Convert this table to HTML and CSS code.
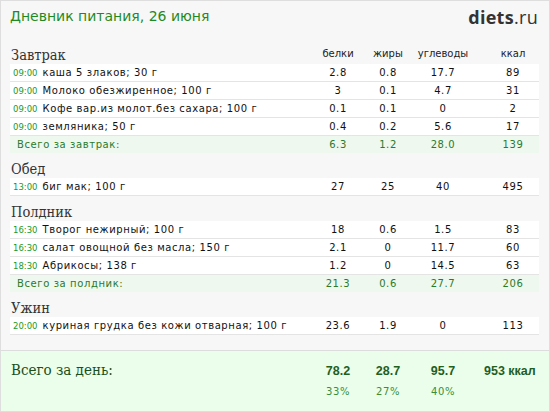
FILE: index.html
```html
<!DOCTYPE html>
<html lang="ru">
<head>
<meta charset="utf-8">
<title>Дневник питания</title>
<link rel="stylesheet" href="styles.css">
</head>
<body>
<div class="page">
  <header class="top">
    <h1 class="title">Дневник питания, 26 июня</h1>
    <div class="logo"><b>diets</b>.ru</div>
  </header>

  <main class="diary">
    <section class="meal">
      <div class="meal-head">
        <h2>Завтрак</h2>
        <span class="label">белки</span>
        <span class="label">жиры</span>
        <span class="label">углеводы</span>
        <span class="label kcal">ккал</span>
      </div>
      <div class="row"><span class="name"><span class="time">09:00</span>каша 5 злаков; 30 г</span><span class="num">2.8</span><span class="num">0.8</span><span class="num">17.7</span><span class="num kcal">89</span></div>
      <div class="row"><span class="name"><span class="time">09:00</span>Молоко обезжиренное; 100 г</span><span class="num">3</span><span class="num">0.1</span><span class="num">4.7</span><span class="num kcal">31</span></div>
      <div class="row"><span class="name"><span class="time">09:00</span>Кофе вар.из молот.без сахара; 100 г</span><span class="num">0.1</span><span class="num">0.1</span><span class="num">0</span><span class="num kcal">2</span></div>
      <div class="row"><span class="name"><span class="time">09:00</span>земляника; 50 г</span><span class="num">0.4</span><span class="num">0.2</span><span class="num">5.6</span><span class="num kcal">17</span></div>
      <div class="row total"><span class="name">Всего за завтрак:</span><span class="num">6.3</span><span class="num">1.2</span><span class="num">28.0</span><span class="num kcal">139</span></div>
    </section>

    <section class="meal">
      <div class="meal-head"><h2>Обед</h2></div>
      <div class="row"><span class="name"><span class="time">13:00</span>биг мак; 100 г</span><span class="num">27</span><span class="num">25</span><span class="num">40</span><span class="num kcal">495</span></div>
    </section>

    <section class="meal">
      <div class="meal-head"><h2>Полдник</h2></div>
      <div class="row"><span class="name"><span class="time">16:30</span>Творог нежирный; 100 г</span><span class="num">18</span><span class="num">0.6</span><span class="num">1.5</span><span class="num kcal">83</span></div>
      <div class="row"><span class="name"><span class="time">16:30</span>салат овощной без масла; 150 г</span><span class="num">2.1</span><span class="num">0</span><span class="num">11.7</span><span class="num kcal">60</span></div>
      <div class="row"><span class="name"><span class="time">18:30</span>Абрикосы; 138 г</span><span class="num">1.2</span><span class="num">0</span><span class="num">14.5</span><span class="num kcal">63</span></div>
      <div class="row total"><span class="name">Всего за полдник:</span><span class="num">21.3</span><span class="num">0.6</span><span class="num">27.7</span><span class="num kcal">206</span></div>
    </section>

    <section class="meal">
      <div class="meal-head"><h2>Ужин</h2></div>
      <div class="row"><span class="name"><span class="time">20:00</span>куриная грудка без кожи отварная; 100 г</span><span class="num">23.6</span><span class="num">1.9</span><span class="num">0</span><span class="num kcal">113</span></div>
    </section>
  </main>

  <footer class="day">
    <div class="day-grid">
      <span class="day-title">Всего за день:</span>
      <span class="big">78.2</span>
      <span class="big">28.7</span>
      <span class="big">95.7</span>
      <span class="big total-kcal">953 ккал</span>
      <span></span>
      <span class="pct">33%</span>
      <span class="pct">27%</span>
      <span class="pct">40%</span>
      <span></span>
    </div>
  </footer>
</div>
</body>
</html>
```

FILE: styles.css
```css
html, body {
  margin: 0;
  padding: 0;
  background: #ffffff;
}

.page {
  width: 550px;
  height: 412px;
  box-sizing: border-box;
  border: 1px solid #dedede;
  background: #f7f7f7;
  display: flex;
  flex-direction: column;
  font-family: "DejaVu Sans", sans-serif;
  color: #222;
  overflow: hidden;
}

.top {
  height: 38px;
  display: flex;
  justify-content: space-between;
  align-items: flex-start;
  padding: 0 11px 0 9px;
}

.title {
  margin: 0;
  padding-top: 7px;
  font-size: 14px;
  line-height: 17px;
  font-weight: normal;
  color: #1f8a1f;
}

.logo {
  padding-top: 4px;
  font-family: "Open Sans", sans-serif;
  font-size: 18px;
  line-height: 24px;
  color: #333;
  letter-spacing: 0.3px;
}

.logo b {
  font-weight: 700;
}

.diary {
  padding: 0 10px 0 9px;
}

.meal-head,
.row,
.day-grid {
  display: grid;
  grid-template-columns: 1fr 52px 48px 62px 65px;
}

.meal-head {
  height: 25px;
  align-items: end;
}

.meal-head h2 {
  margin: 0;
  font-family: "DejaVu Serif", serif;
  font-stretch: condensed;
  font-weight: normal;
  font-size: 14.5px;
  line-height: 17px;
  color: #333;
  padding-left: 1px;
}

.label {
  text-align: center;
  font-size: 10px;
  line-height: 13px;
  padding-bottom: 4px;
  color: #222;
}

.kcal {
  padding-left: 13px;
}

.row {
  height: 17px;
  border-bottom: 1px solid #e4e4e4;
  background: #ffffff;
  align-items: center;
  font-size: 10px;
  letter-spacing: 0.6px;
  color: #111;
  white-space: nowrap;
}

.name {
  padding-left: 3px;
  overflow: hidden;
}

.time {
  font-size: 8.5px;
  letter-spacing: 0;
  color: #1a9a1a;
  margin-right: 5px;
}

.num {
  text-align: center;
}

.row.total {
  background: #eef8ee;
  border-bottom: none;
  color: #2a7a2a;
}

.row.total .name {
  padding-left: 7px;
}

.day {
  margin-top: auto;
  height: 61px;
  box-sizing: border-box;
  border-top: 1px solid #dcdcdc;
  background: #ebfeeb;
  padding: 10px 10px 0 9px;
}

.day-grid {
  row-gap: 5px;
  align-items: end;
}

.day-title {
  font-family: "DejaVu Serif", serif;
  font-stretch: condensed;
  font-size: 15px;
  line-height: 19px;
  color: #1a4f1a;
  padding-left: 1px;
}

.big {
  text-align: center;
  font-family: "Liberation Sans", sans-serif;
  font-weight: bold;
  font-size: 12.5px;
  line-height: 17px;
  color: #1f5f1f;
}

.total-kcal {
  text-align: left;
  padding-left: 10px;
}

.pct {
  text-align: center;
  font-size: 10px;
  line-height: 14px;
  letter-spacing: 0.6px;
  color: #3a8e3a;
}
```
